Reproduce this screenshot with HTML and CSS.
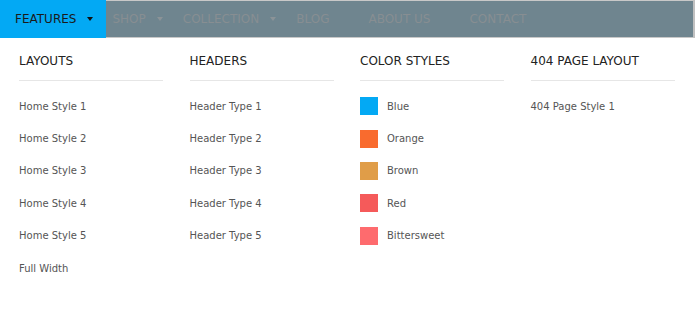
FILE: index.html
```html
<!DOCTYPE html>
<html lang="en">
<head>
    <meta charset="UTF-8">
    <title>Mega Menu</title>
    <link rel="stylesheet" href="styles.css">
</head>
<body>
    <nav class="navbar">
        <ul class="nav-list">
            <li class="nav-item active caret-item">FEATURES <span class="caret"></span></li>
            <li class="nav-item caret-item">SHOP <span class="caret"></span></li>
            <li class="nav-item caret-item">COLLECTION <span class="caret"></span></li>
            <li class="nav-item">BLOG</li>
            <li class="nav-item">ABOUT US</li>
            <li class="nav-item">CONTACT</li>
        </ul>
    </nav>

    <div class="mega-menu">
        <div class="menu-col">
            <h3>LAYOUTS</h3>
            <ul>
                <li>Home Style 1</li>
                <li>Home Style 2</li>
                <li>Home Style 3</li>
                <li>Home Style 4</li>
                <li>Home Style 5</li>
                <li>Full Width</li>
            </ul>
        </div>
        <div class="menu-col">
            <h3>HEADERS</h3>
            <ul>
                <li>Header Type 1</li>
                <li>Header Type 2</li>
                <li>Header Type 3</li>
                <li>Header Type 4</li>
                <li>Header Type 5</li>
            </ul>
        </div>
        <div class="menu-col">
            <h3>COLOR STYLES</h3>
            <ul class="colors">
                <li><span class="swatch blue"></span>Blue</li>
                <li><span class="swatch orange"></span>Orange</li>
                <li><span class="swatch brown"></span>Brown</li>
                <li><span class="swatch red"></span>Red</li>
                <li><span class="swatch bittersweet"></span>Bittersweet</li>
            </ul>
        </div>
        <div class="menu-col">
            <h3>404 PAGE LAYOUT</h3>
            <ul>
                <li>404 Page Style 1</li>
            </ul>
        </div>
    </div>
</body>
</html>
```

FILE: styles.css
```css
body {
    margin: 0;
    font-family: "DejaVu Sans", sans-serif;
    background: #fff;
}
.navbar {
    background: #6f858f;
    border-top: 1px solid #c8c8c8;
    border-bottom: 1px solid #c8c8c8;
    border-right: 2px solid #c0c0c0;
}
.nav-list {
    list-style: none;
    margin: 0;
    padding: 0;
    display: flex;
    height: 36px;
}
.nav-item {
    display: flex;
    align-items: center;
    padding: 0 33px 0 6px;
    font-size: 12px;
    color: #878e92;
}
.caret-item {
    padding-right: 14px;
}
.nav-item.active {
    background: #03a9f4;
    color: #1a1a1a;
    padding-left: 15px;
    padding-right: 13px;
    margin-top: -1px;
    margin-bottom: -1px;
}
.caret {
    width: 0;
    height: 0;
    margin-left: 11px;
    border-left: 3.5px solid transparent;
    border-right: 3.5px solid transparent;
    border-top: 4px solid #8b9397;
}
.active .caret {
    border-top-color: #111;
}
.mega-menu {
    display: grid;
    grid-template-columns: repeat(4, 144px);
    column-gap: 26.5px;
    padding: 0 19px;
}
.menu-col h3 {
    margin: 0;
    padding: 16px 0 12px;
    font-size: 12px;
    font-weight: normal;
    color: #222;
    border-bottom: 1px solid #e6e6e6;
}
.menu-col ul {
    list-style: none;
    margin: 0;
    padding: 9px 0 0;
}
.menu-col li {
    display: flex;
    align-items: center;
    height: 32.4px;
    font-size: 10px;
    color: #555;
}
.swatch {
    width: 18px;
    height: 18px;
    margin-right: 9px;
}
.blue { background: #03a9f4; }
.orange { background: #f96b2e; }
.brown { background: #e09d48; }
.red { background: #f55a5a; }
.bittersweet { background: #fe6b6e; }
```
